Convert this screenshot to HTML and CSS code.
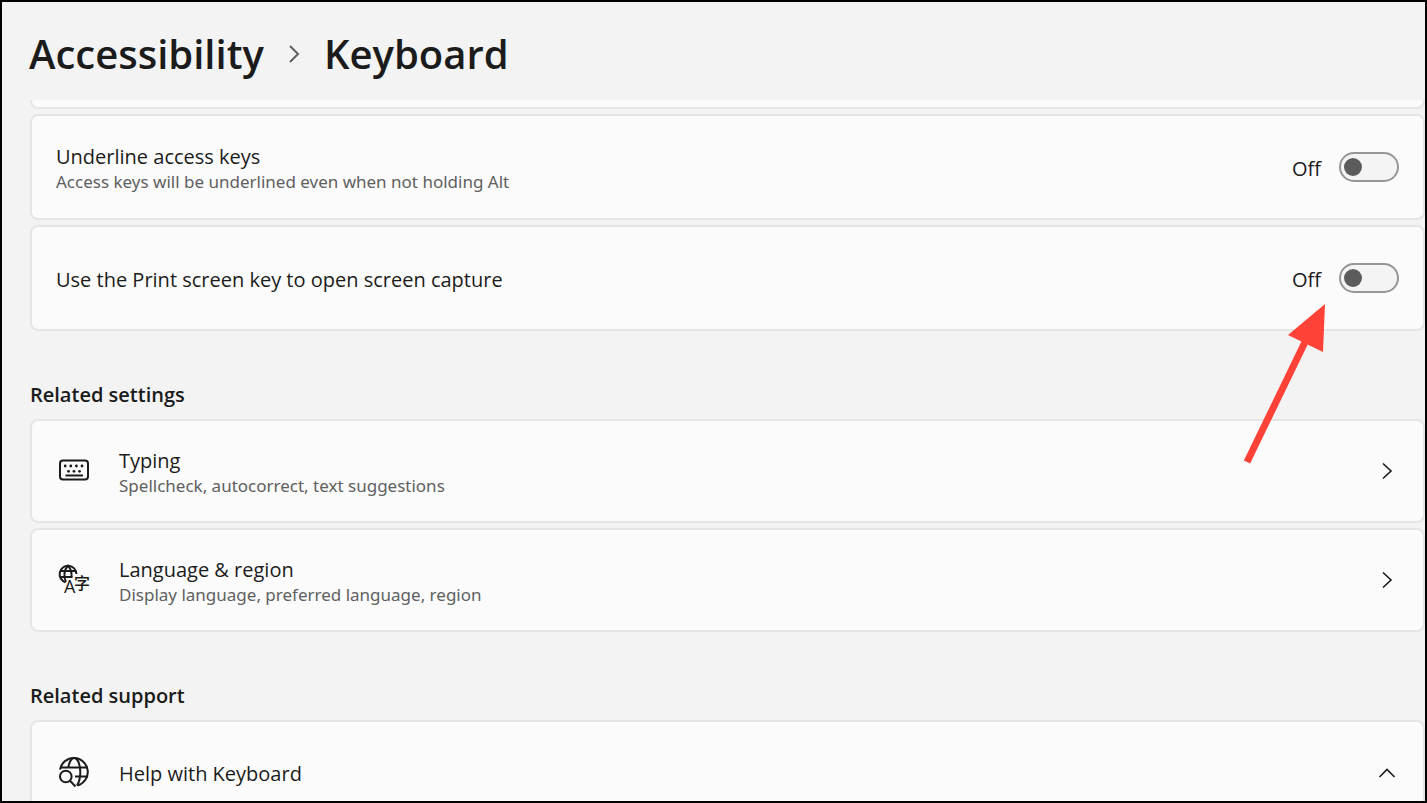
FILE: index.html
```html
<!DOCTYPE html>
<html lang="en">
<head>
  <meta charset="UTF-8" />
  <meta name="viewport" content="width=device-width, initial-scale=1.0"/>
  <title>Accessibility - Keyboard</title>
  <link rel="stylesheet" href="styles.css">
</head>
<body>
  <div class="window">
    <header class="header">
      <nav class="breadcrumb">
        <a href="#">Accessibility</a>
        <svg class="crumb-arrow" width="12" height="18" viewBox="0 0 12 18" aria-hidden="true"><path d="M2 1l8 8-8 8"/></svg>
        <h1>Keyboard</h1>
      </nav>
    </header>

    <main class="content">
      <div class="card card-cut"></div>

      <div class="card card-toggle">
        <label class="text" for="underlineKeys">
          <span class="title">Underline access keys</span>
          <span class="desc">Access keys will be underlined even when not holding Alt</span>
        </label>
        <span class="state">Off</span>
        <input class="switch" type="checkbox" role="switch" id="underlineKeys" />
      </div>

      <div class="card card-toggle">
        <label class="text" for="printScreen">
          <span class="title">Use the Print screen key to open screen capture</span>
        </label>
        <span class="state">Off</span>
        <input class="switch" type="checkbox" role="switch" id="printScreen" />
        <svg class="pointer" width="90" height="168" viewBox="0 0 90 168" aria-hidden="true">
          <path class="shaft" d="M66 40L7 162"/>
          <path class="head" d="M85 4L48 35l35 17z"/>
        </svg>
      </div>

      <h2>Related settings</h2>

      <a class="card card-link" href="#">
        <svg class="icon" width="32" height="32" viewBox="0 0 32 32" aria-hidden="true">
          <rect x="2" y="5.500" width="28" height="19" rx="3"/>
          <path d="M7.500 20.500h17.500"/>
          <g class="dots">
            <circle cx="7.200" cy="11" r="1.400"/><circle cx="12.800" cy="11" r="1.400"/><circle cx="18.400" cy="11" r="1.400"/><circle cx="24" cy="11" r="1.400"/>
            <circle cx="10.500" cy="16.300" r="1.400"/><circle cx="16" cy="16.300" r="1.400"/><circle cx="21.500" cy="16.300" r="1.400"/>
          </g>
        </svg>
        <span class="text">
          <span class="title">Typing</span>
          <span class="desc">Spellcheck, autocorrect, text suggestions</span>
        </span>
        <svg class="chevron" width="18" height="18" viewBox="0 0 18 18" aria-hidden="true"><path d="M4 1.500l8 7.500-8 7.500"/></svg>
      </a>

      <a class="card card-link" href="#">
        <svg class="icon" width="32" height="32" viewBox="0 0 32 32" aria-hidden="true">
          <path d="M7.500 18.200A8.400 8.400 0 1 1 18.400 10"/>
          <path d="M8 18C5.500 13.500 5.700 6 10 1.800c2.800 2.700 3.700 6 3.600 11"/>
          <path d="M2.500 7h15M2.500 13h12"/>
          <text class="glyph-latin" x="6" y="29">A</text>
          <text class="glyph-han" x="16" y="25">字</text>
        </svg>
        <span class="text">
          <span class="title">Language &amp; region</span>
          <span class="desc">Display language, preferred language, region</span>
        </span>
        <svg class="chevron" width="18" height="18" viewBox="0 0 18 18" aria-hidden="true"><path d="M4 1.500l8 7.500-8 7.500"/></svg>
      </a>

      <h2>Related support</h2>

      <button class="card card-link" type="button" aria-expanded="true">
        <svg class="icon" width="32" height="32" viewBox="0 0 32 32" aria-hidden="true">
          <path d="M2 13.500A14 14 0 1 1 19.500 29.500"/>
          <path d="M2.500 11.500h27M17 20.500h12.500"/>
          <path d="M10.300 11.500C11.200 6.500 13.500 2 16 2c3.500 0 6.300 6 6.300 14 0 6-1.300 10.500-3.300 13.500"/>
          <circle cx="7.800" cy="20.500" r="5.800"/>
          <path d="M12 24.700l5.500 5.800"/>
        </svg>
        <span class="text">
          <span class="title">Help with Keyboard</span>
        </span>
        <svg class="chevron" width="18" height="18" viewBox="0 0 18 18" aria-hidden="true"><path d="M.500 14L8 6.500l7.500 7.500"/></svg>
      </button>
    </main>
  </div>
</body>
</html>
```
FILE: styles.css
```css
* {
  box-sizing: border-box;
}

body {
  margin: 0;
  font-family: 'Segoe UI', 'Open Sans', 'Noto Sans', sans-serif;
  font-size: 20px;
  line-height: 28px;
  color: #1b1b1b;
  background: #f3f3f3;
}

.window {
  display: flex;
  flex-direction: column;
  height: 100vh;
  border: 2px solid #000;
  overflow: hidden;
}

.header {
  flex: none;
  padding: 24px 27px 18px;
}

.breadcrumb {
  display: flex;
  align-items: center;
  gap: 24px;
  font-size: 40px;
  line-height: 56px;
  font-weight: 600;
}

.breadcrumb a {
  color: inherit;
  text-decoration: none;
}

h1 {
  margin: 0;
  font-size: 40px;
  font-weight: 600;
}

.crumb-arrow {
  fill: none;
  stroke: #5f5f5f;
  stroke-width: 2;
}

.content {
  flex: 1;
  min-height: 0;
  display: flex;
  flex-direction: column;
  gap: 5px;
  padding-left: 28px;
  overflow: hidden;
}

.card {
  position: relative;
  flex: none;
  display: flex;
  align-items: center;
  width: 100%;
  padding: 0 24px;
  background: #fbfbfb;
  border: 2px solid #e5e5e5;
  border-radius: 8px;
  color: inherit;
  font: inherit;
  text-align: left;
  text-decoration: none;
}

/* Bottom of the card that is scrolled under the header */
.card-cut {
  height: 9px;
  border-top: none;
  border-radius: 0 0 8px 8px;
}

.card-toggle {
  min-height: 106px;
}

.card-link {
  min-height: 104px;
  padding: 0 26px;
}

.text {
  flex: 1;
  display: flex;
  flex-direction: column;
  padding-top: 3px;
}

.title {
  font-size: 20px;
  line-height: 26px;
}

.desc {
  font-family: 'Segoe UI', 'Noto Sans', sans-serif;
  font-size: 17px;
  line-height: 24px;
  color: #606060;
}

h2 {
  margin: 45px 0 5px;
  font-size: 20px;
  line-height: 28px;
  font-weight: 600;
}

.state {
  margin-right: 18px;
  padding-top: 3px;
}

/* Toggle switch */
.switch {
  appearance: none;
  display: flex;
  align-items: center;
  width: 60px;
  height: 30px;
  margin: 0;
  padding: 0 3px;
  background: #f4f4f4;
  border: 2px solid #969696;
  border-radius: 15px;
  cursor: pointer;
}

.switch::before {
  content: "";
  width: 18px;
  height: 18px;
  border-radius: 50%;
  background: #5c5c5c;
}

.switch:checked {
  justify-content: flex-end;
}

/* Icons */
.icon {
  flex: none;
  margin-right: 29px;
  fill: none;
  stroke: #1b1b1b;
  stroke-width: 2;
}

.dots {
  fill: #1b1b1b;
  stroke: none;
}

.icon text {
  fill: #1b1b1b;
  stroke: none;
  font-weight: 500;
}

.glyph-latin {
  font-size: 18px;
}

.glyph-han {
  font-family: 'Noto Sans CJK SC', sans-serif;
  font-size: 16px;
}

.chevron {
  flex: none;
  fill: none;
  stroke: #1b1b1b;
  stroke-width: 1.6;
}

.icon,
.chevron {
  overflow: visible;
}

.pointer {
  position: absolute;
  top: 73px;
  right: 93px;
  z-index: 1;
  pointer-events: none;
}

.shaft {
  fill: none;
  stroke: #ff4238;
  stroke-width: 7;
}

.head {
  fill: #ff4238;
}
```
